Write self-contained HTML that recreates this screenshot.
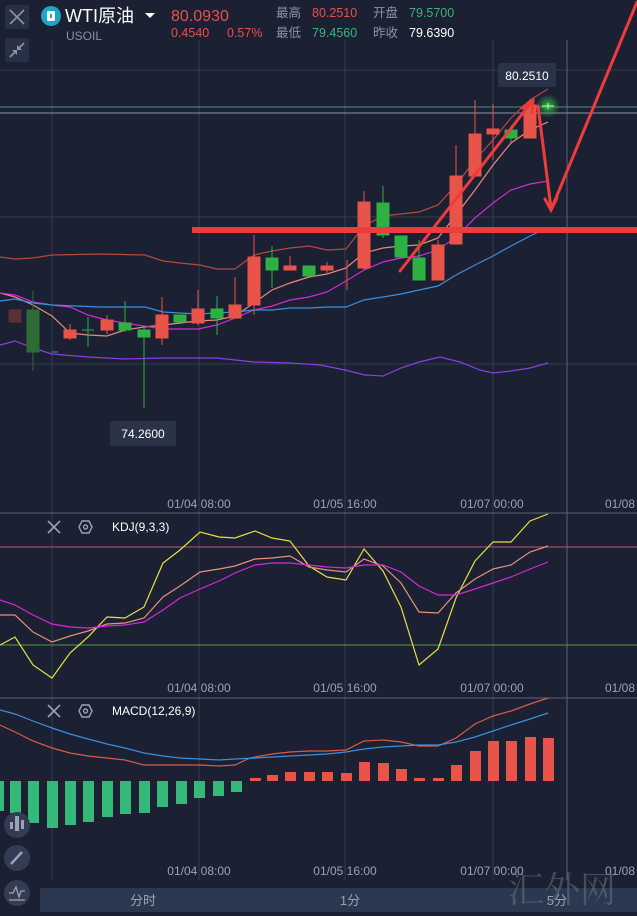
<!DOCTYPE html>
<html><head><meta charset="utf-8"><style>
html,body{margin:0;padding:0;background:#1b2133;width:637px;height:916px;overflow:hidden;font-family:"Liberation Sans","Noto Sans CJK SC",sans-serif}
svg{display:block}
</style></head><body>
<svg width="637" height="916" viewBox="0 0 637 916" xmlns="http://www.w3.org/2000/svg" font-family="Liberation Sans, Noto Sans CJK SC, sans-serif">
<defs><radialGradient id="gl"><stop offset="0" stop-color="#3fd050" stop-opacity="0.9"/><stop offset="1" stop-color="#2fb043" stop-opacity="0"/></radialGradient></defs>
<rect width="637" height="916" fill="#1b2133"/>
<!-- grid -->
<g stroke="#323b50" stroke-width="1">
<line x1="52" y1="40" x2="52" y2="880"/><line x1="199" y1="40" x2="199" y2="880"/><line x1="345" y1="40" x2="345" y2="880"/><line x1="493" y1="40" x2="493" y2="880"/>
<line x1="0" y1="70" x2="637" y2="70"/><line x1="0" y1="217" x2="637" y2="217"/><line x1="0" y1="364" x2="637" y2="364"/>
</g>
<line x1="567" y1="40" x2="567" y2="880" stroke="#5a6378"/>
<line x1="0" y1="107" x2="637" y2="107" stroke="#4f8f8a"/>
<line x1="0" y1="113" x2="637" y2="113" stroke="#8a92a4"/>
<line x1="0" y1="513" x2="637" y2="513" stroke="#5b6478"/>
<line x1="0" y1="698" x2="637" y2="698" stroke="#5b6478"/>
<line x1="0" y1="547" x2="637" y2="547" stroke="#b05a6e"/>
<line x1="0" y1="645" x2="637" y2="645" stroke="#4f9a4a"/>

<!-- MA lines main -->
<g fill="none" stroke-width="1.2">
<polyline stroke="#b4483e" points="0,257 15,259 33,258 52,255 100,254 145,255 163,261 180,263 200,265 217,269 235,269 254,255 272,251 290,248 309,246 327,250 346,249 364,226 383,216 401,214 419,212 438,205 456,185 475,160 493,140 511,118 530,100 548,89"/>
<polyline stroke="#e88a78" points="0,293 15,297 33,305 52,316 70,333 88,335 107,336 125,330 144,327 163,325 180,323 198,321 217,320 235,316 254,303 272,290 290,283 309,277 327,274 346,268 364,253 383,248 401,246 419,245 438,238 456,215 475,190 493,165 511,143 530,130 548,122"/>
<polyline stroke="#d22ad6" points="0,293 15,295 33,302 52,305 70,307 88,315 107,320 125,323 144,326 163,329 180,329 198,329 217,325 235,318 254,310 272,306 290,300 309,297 327,292 346,281 364,270 383,262 401,258 419,256 438,250 456,237 475,218 493,203 511,190 530,184 548,181"/>
<polyline stroke="#3b8de0" points="0,301 15,299 33,303 52,305 100,307 145,307 163,312 180,313 198,314 235,312 254,310 272,310 290,308 309,308 327,307 346,307 364,300 383,297 401,294 419,290 438,286 456,275 475,265 493,256 511,246 530,236 545,229"/>
<polyline stroke="#8a3ee0" points="0,345 15,341 33,348 52,354 88,357 125,359 163,358 217,358 254,362 290,363 320,365 345,370 365,375 383,376 401,368 419,362 440,357 460,362 480,370 493,373 511,371 530,368 548,363"/>
</g>

<!-- candles -->
<g stroke-width="1">
<g stroke="#5a2f35" fill="#5a2f35"><rect x="9" y="310" width="12" height="12"/></g>
<g stroke="#2e6b35" fill="#2e6b35"><line x1="33" y1="291" x2="33" y2="371"/><rect x="27" y="310" width="12" height="42"/></g>
<g stroke="#2fb043" fill="#2fb043">
<line x1="52" y1="352" x2="58" y2="352"/>
<line x1="88" y1="317" x2="88" y2="347"/><line x1="82" y1="330" x2="94" y2="330"/>
<line x1="125" y1="301" x2="125" y2="332"/><rect x="119" y="323" width="12" height="7"/>
<line x1="144" y1="326" x2="144" y2="408"/><rect x="138" y="330" width="12" height="7"/>
<rect x="174" y="315" width="12" height="7"/>
<line x1="217" y1="296" x2="217" y2="335"/><rect x="211" y="309" width="12" height="9"/>
<line x1="272" y1="246" x2="272" y2="288"/><rect x="266" y="258" width="12" height="12"/>
<rect x="303" y="266" width="12" height="10"/>
<line x1="383" y1="186" x2="383" y2="238"/><rect x="377" y="203" width="12" height="32"/>
<rect x="395" y="236" width="12" height="21"/>
<line x1="419" y1="240" x2="419" y2="280"/><rect x="413" y="258" width="12" height="22"/>
<line x1="511" y1="126" x2="511" y2="142"/><rect x="505" y="130" width="12" height="8"/>
</g>
<g stroke="#e8544a" fill="#e8544a">
<line x1="70" y1="324" x2="70" y2="340"/><rect x="64" y="330" width="12" height="8"/>
<line x1="107" y1="315" x2="107" y2="334"/><rect x="101" y="320" width="12" height="10"/>
<line x1="162" y1="297" x2="162" y2="345"/><rect x="156" y="315" width="12" height="23"/>
<line x1="198" y1="290" x2="198" y2="325"/><rect x="192" y="309" width="12" height="14"/>
<line x1="235" y1="277" x2="235" y2="318"/><rect x="229" y="305" width="12" height="13"/>
<line x1="254" y1="235" x2="254" y2="315"/><rect x="248" y="257" width="12" height="48"/>
<line x1="290" y1="256" x2="290" y2="270"/><rect x="284" y="266" width="12" height="4"/>
<line x1="327" y1="262" x2="327" y2="274"/><rect x="321" y="266" width="12" height="4"/>
<line x1="347" y1="260" x2="347" y2="290"/>
<line x1="364" y1="191" x2="364" y2="270"/><rect x="358" y="202" width="12" height="66"/>
<line x1="438" y1="240" x2="438" y2="280"/><rect x="432" y="245" width="12" height="35"/>
<line x1="456" y1="145" x2="456" y2="244"/><rect x="450" y="176" width="12" height="68"/>
<line x1="475" y1="100" x2="475" y2="176"/><rect x="469" y="134" width="12" height="42"/>
<line x1="493" y1="104" x2="493" y2="160"/><rect x="487" y="129" width="12" height="5"/>
<line x1="530" y1="100" x2="530" y2="138"/><rect x="524" y="105" width="12" height="33"/>
</g>
</g>
<circle cx="548" cy="106" r="12" fill="url(#gl)"/>
<line x1="542" y1="106" x2="554" y2="106" stroke="#9dff9a"/>
<line x1="548" y1="103" x2="548" y2="109" stroke="#9dff9a"/>

<!-- drawn annotations -->
<rect x="192" y="227" width="445" height="6" fill="#ee3b3b"/>
<g stroke="#ee3b3b" stroke-width="3" fill="none" stroke-linecap="round">
<line x1="400" y1="271" x2="530" y2="104"/>
<line x1="538" y1="106" x2="551" y2="208"/>
<line x1="551" y1="210" x2="637" y2="2"/>
<polyline points="522,108 533,100 532,113"/>
<polyline points="545,199 551,210 557,198"/>
</g>

<!-- price tooltips -->
<rect x="498" y="63" width="58" height="24" rx="2" fill="#2a3348"/>
<text x="527" y="80" fill="#fff" font-size="12" text-anchor="middle">80.2510</text>
<rect x="110" y="421" width="66" height="25" rx="2" fill="#2a3348"/>
<text x="143" y="438" fill="#fff" font-size="12" text-anchor="middle">74.2600</text>

<!-- date labels -->
<g fill="#9aa2b4" font-size="12" text-anchor="middle">
<text x="199" y="508">01/04 08:00</text><text x="345" y="508">01/05 16:00</text><text x="492" y="508">01/07 00:00</text><text x="620" y="508">01/08</text>
<text x="199" y="692">01/04 08:00</text><text x="345" y="692">01/05 16:00</text><text x="492" y="692">01/07 00:00</text><text x="620" y="692">01/08</text>
<text x="199" y="875">01/04 08:00</text><text x="345" y="875">01/05 16:00</text><text x="492" y="875">01/07 00:00</text><text x="620" y="875">01/08</text>
</g>

<!-- KDJ -->
<g fill="none" stroke-width="1.2">
<polyline stroke="#e6e040" points="0,645 15,637 33,665 52,678 70,653 88,637 107,617 125,618 144,607 163,563 180,550 200,532 219,537 235,538 255,531 272,538 290,541 309,566 327,577 346,580 364,549 383,571 401,607 419,665 438,649 456,598 475,561 493,542 511,542 530,521 548,514"/>
<polyline stroke="#e8907e" points="0,615 15,615 33,632 52,642 70,636 88,631 107,624 125,623 144,618 163,597 180,586 200,572 219,569 235,566 255,559 272,558 290,556 309,567 327,570 346,572 364,559 383,566 401,583 419,612 438,613 456,593 475,579 493,569 511,565 530,552 548,546"/>
<polyline stroke="#d22ad6" points="0,600 15,605 33,615 52,624 70,627 88,628 107,626 125,625 144,622 163,610 180,598 200,589 219,581 235,573 255,565 272,563 290,563 309,565 327,567 346,568 364,565 383,565 401,572 419,586 438,595 456,595 475,589 493,583 511,577 530,569 548,562"/>
</g>
<g stroke="#9aa2b4" stroke-width="1.6"><line x1="48" y1="521" x2="60" y2="533"/><line x1="60" y1="521" x2="48" y2="533"/>
<line x1="48" y1="705" x2="60" y2="717"/><line x1="60" y1="705" x2="48" y2="717"/></g>
<g fill="none" stroke="#9aa2b4" stroke-width="1.4"><polygon points="79,527 82,521 89,521 92,527 89,533 82,533"/><circle cx="85.5" cy="527" r="2"/>
<polygon points="79,711 82,705 89,705 92,711 89,717 82,717"/><circle cx="85.5" cy="711" r="2"/></g>
<text x="112" y="531" fill="#fff" font-size="12">KDJ(9,3,3)</text>
<text x="112" y="715" fill="#fff" font-size="12">MACD(12,26,9)</text>

<!-- MACD -->
<g fill="none" stroke-width="1.2">
<polyline stroke="#d85a48" points="0,725 15,732 33,741 52,748 70,753 88,756 107,758 125,760 144,765 163,765 180,765 200,765 219,766 235,765 250,758 272,754 290,752 309,751 327,751 346,750 364,741 383,740 401,742 419,746 438,746 456,738 475,724 493,716 511,711 530,704 548,698"/>
<polyline stroke="#3b8de0" points="0,710 15,714 33,721 52,728 70,734 88,739 107,744 125,748 144,753 163,756 180,758 200,759 219,760 235,759 255,758 272,757 290,756 309,755 327,754 346,752 364,749 383,747 401,746 419,745 438,745 456,742 475,737 493,731 511,725 530,719 548,713"/>
</g>
<g fill="#e8544a">
<rect x="250" y="778" width="11" height="3"/><rect x="267" y="775" width="11" height="6"/><rect x="285" y="772" width="11" height="9"/><rect x="304" y="772" width="11" height="9"/><rect x="322" y="772" width="11" height="9"/><rect x="341" y="773" width="11" height="8"/><rect x="359" y="762" width="11" height="19"/><rect x="378" y="763" width="11" height="18"/><rect x="396" y="769" width="11" height="12"/><rect x="414" y="778" width="11" height="3"/><rect x="433" y="778" width="11" height="3"/><rect x="451" y="765" width="11" height="16"/><rect x="470" y="751" width="11" height="30"/><rect x="488" y="741" width="11" height="40"/><rect x="506" y="741" width="11" height="40"/><rect x="525" y="737" width="11" height="44"/><rect x="543" y="738" width="11" height="43"/>
</g>
<g fill="#35b97a">
<rect x="0" y="781" width="4" height="30"/><rect x="10" y="781" width="11" height="32"/><rect x="28" y="781" width="11" height="42"/><rect x="47" y="781" width="11" height="47"/><rect x="65" y="781" width="11" height="44"/><rect x="83" y="781" width="11" height="41"/><rect x="102" y="781" width="11" height="36"/><rect x="120" y="781" width="11" height="33"/><rect x="139" y="781" width="11" height="32"/><rect x="157" y="781" width="11" height="26"/><rect x="176" y="781" width="11" height="23"/><rect x="194" y="781" width="11" height="17"/><rect x="213" y="781" width="11" height="15"/><rect x="231" y="781" width="11" height="11"/>
</g>

<!-- left tool icons -->
<g fill="#333c52">
<circle cx="17" cy="825" r="13"/><circle cx="17" cy="858" r="13"/><circle cx="17" cy="893" r="13"/>
</g>
<g fill="#9aa2b4"><rect x="10" y="822" width="3" height="7"/><rect x="15" y="816" width="4" height="15"/><rect x="21" y="820" width="3" height="9"/></g>
<line x1="11" y1="864" x2="22" y2="852" stroke="#9aa2b4" stroke-width="2.5"/>
<g fill="none" stroke="#9aa2b4" stroke-width="1.3"><polyline points="9,893 13,893 16,887 19,897 21,891 25,891"/><line x1="9" y1="900" x2="25" y2="900"/></g>

<!-- bottom tab bar -->
<rect x="40" y="888" width="597" height="24" fill="#2c3850"/>
<g fill="#9aa2b4" font-size="13" text-anchor="middle">
<text x="143" y="905">分时</text><text x="350" y="905">1分</text><text x="557" y="905">5分</text>
</g>
<text x="508" y="902" fill="#6a7080" font-size="36" font-family="Liberation Serif, Noto Serif CJK SC, serif" opacity="0.55">汇外网</text>

<!-- header -->
<rect x="5" y="5" width="24" height="24" rx="2" fill="#283047"/>
<g stroke="#8c94a6" stroke-width="1.6"><line x1="10" y1="10" x2="24" y2="24"/><line x1="24" y1="10" x2="10" y2="24"/></g>
<rect x="5" y="38" width="24" height="24" rx="2" fill="#283047"/>
<g stroke="#8c94a6" stroke-width="1.6"><line x1="10" y1="57" x2="15" y2="52"/><line x1="24" y1="43" x2="19" y2="48"/></g>
<g fill="#8c94a6"><polygon points="17,50 17,55 12,50"/><polygon points="17,50 22,50 17,45"/></g>
<circle cx="51" cy="16" r="10" fill="#1ea6c8"/>
<rect x="47" y="11" width="8" height="10" rx="1.5" fill="#fff"/><rect x="50" y="14" width="2" height="4" fill="#1ea6c8"/>
<text x="65" y="22" fill="#fff" font-size="18">WTI原油</text>
<polygon points="145,13 155,13 150,18" fill="#fff"/>
<text x="66" y="40" fill="#8a92a4" font-size="12">USOIL</text>
<text x="171" y="21" fill="#e8504c" font-size="16">80.0930</text>
<text x="171" y="37" fill="#e8504c" font-size="12.5">0.4540</text>
<text x="227" y="37" fill="#e8504c" font-size="12.5">0.57%</text>
<g font-size="12.5">
<text x="276" y="17" fill="#8a92a4">最高</text><text x="312" y="17" fill="#e8504c">80.2510</text>
<text x="373" y="17" fill="#8a92a4">开盘</text><text x="409" y="17" fill="#3fb07a">79.5700</text>
<text x="276" y="37" fill="#8a92a4">最低</text><text x="312" y="37" fill="#3fb07a">79.4560</text>
<text x="373" y="37" fill="#8a92a4">昨收</text><text x="409" y="37" fill="#fff">79.6390</text>
</g>
</svg>
</body></html>
